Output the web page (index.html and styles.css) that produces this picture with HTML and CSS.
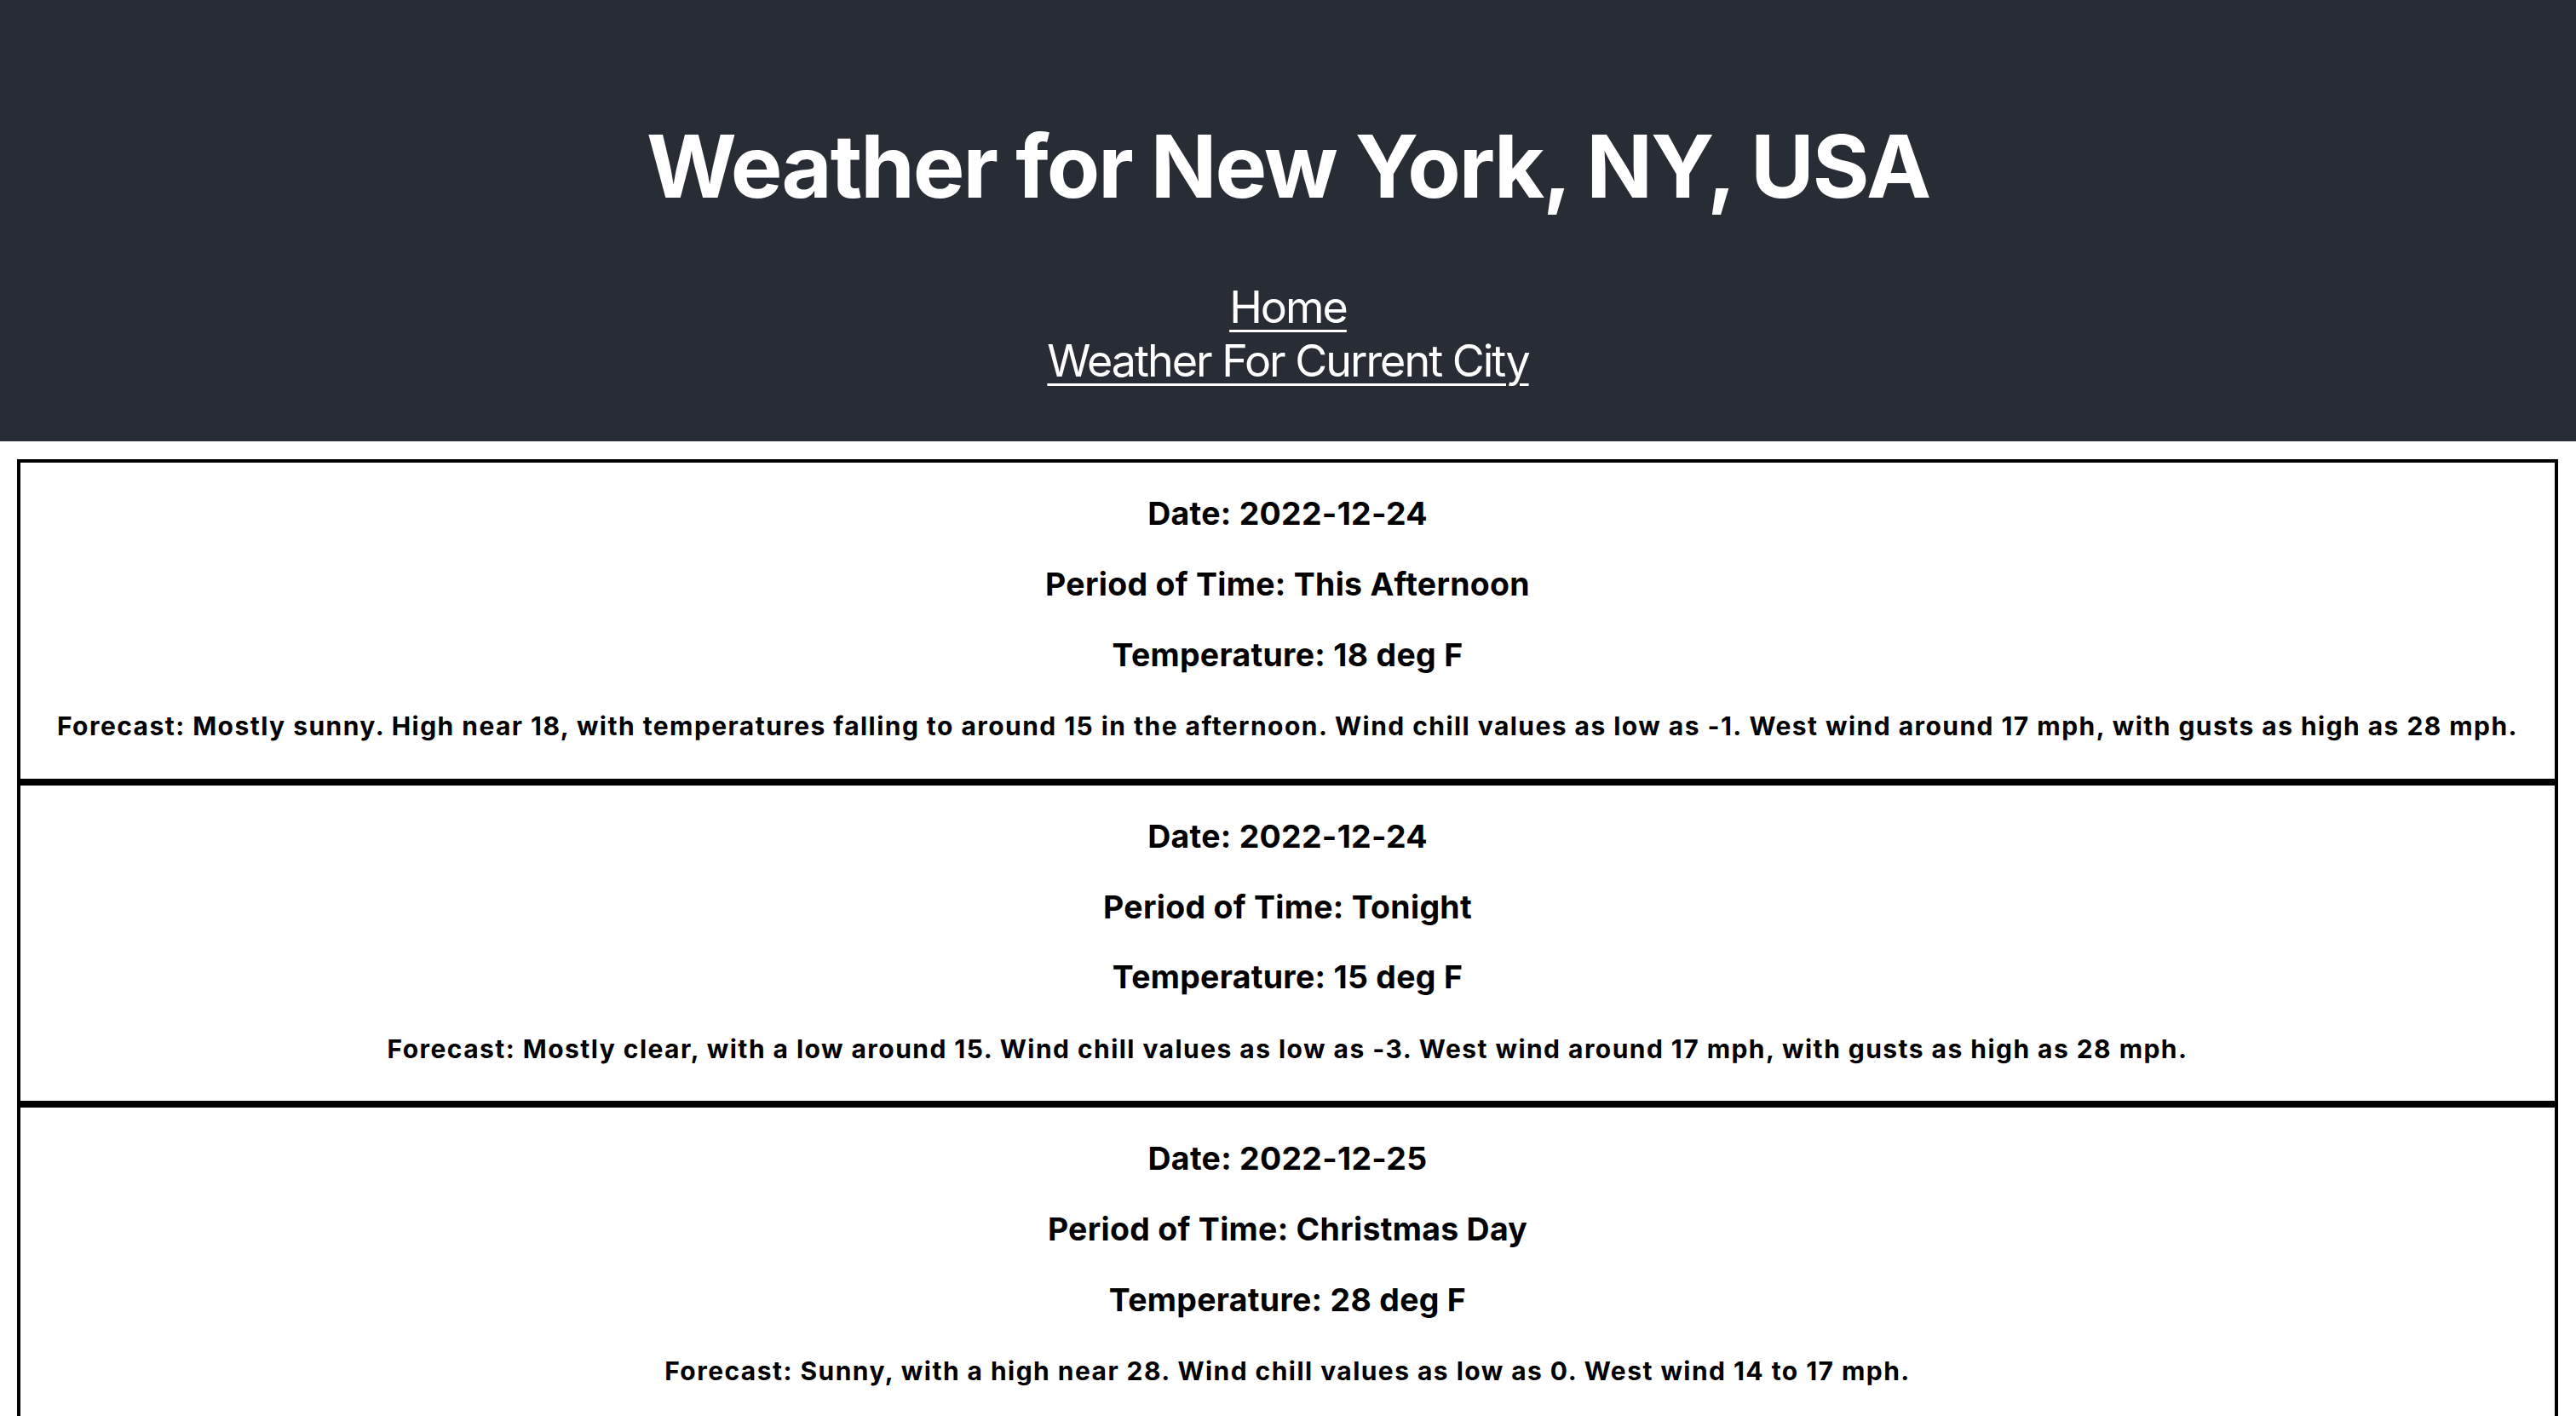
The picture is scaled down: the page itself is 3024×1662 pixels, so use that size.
FILE: index.html
```html
<!DOCTYPE html>
<html lang="en">
<head>
<meta charset="utf-8">
<title>Weather for New York, NY, USA</title>
<link rel="stylesheet" href="styles.css">
</head>
<body>
<header class="app-header">
  <h1 class="title">Weather for New York, NY, USA</h1>
  <a class="nav-link" href="#">Home</a>
  <a class="nav-link" href="#">Weather For Current City</a>
</header>
<main class="forecast-list">
  <div class="period">
    <h3 class="period-line">Date: 2022-12-24</h3>
    <h3 class="period-line">Period of Time: This Afternoon</h3>
    <h3 class="period-line">Temperature: 18 deg F</h3>
    <h5 class="period-forecast">Forecast: Mostly sunny. High near 18, with temperatures falling to around 15 in the afternoon. Wind chill values as low as -1. West wind around 17 mph, with gusts as high as 28 mph.</h5>
  </div>
  <div class="period">
    <h3 class="period-line">Date: 2022-12-24</h3>
    <h3 class="period-line">Period of Time: Tonight</h3>
    <h3 class="period-line">Temperature: 15 deg F</h3>
    <h5 class="period-forecast">Forecast: Mostly clear, with a low around 15. Wind chill values as low as -3. West wind around 17 mph, with gusts as high as 28 mph.</h5>
  </div>
  <div class="period">
    <h3 class="period-line">Date: 2022-12-25</h3>
    <h3 class="period-line">Period of Time: Christmas Day</h3>
    <h3 class="period-line">Temperature: 28 deg F</h3>
    <h5 class="period-forecast">Forecast: Sunny, with a high near 28. Wind chill values as low as 0. West wind 14 to 17 mph.</h5>
  </div>
</main>
</body>
</html>
```
FILE: styles.css
```css
html, body {
  margin: 0;
  padding: 0;
  background: #ffffff;
}

body {
  font-family: Inter, "Noto Sans", "Liberation Sans", sans-serif;
  font-size: 32px;
  color: #000000;
}

.app-header {
  background-color: #282c34;
  min-height: 518px;
  box-sizing: border-box;
  display: flex;
  flex-direction: column;
  align-items: center;
  justify-content: center;
  color: #ffffff;
  font-size: 52px;
}

.title {
  font-size: 102px;
  font-weight: 700;
  letter-spacing: -2px;
  margin: 71px 0;
  line-height: 1.23;
}

.nav-link {
  color: #ffffff;
  font-weight: 400;
  letter-spacing: -2px;
  line-height: 1.21;
  text-decoration: underline;
  text-decoration-thickness: 3px;
  text-underline-offset: 8px;
}

.forecast-list {
  padding: 21px 21px 0 20px;
}

.period {
  border: 4px solid #000000;
  text-align: center;
}

.period-line {
  font-size: 37.44px;
  font-weight: 700;
  letter-spacing: 0.3px;
  margin: 37.44px 0;
  line-height: 1.21;
}

.period-forecast {
  font-size: 30px;
  font-weight: 700;
  letter-spacing: 1.45px;
  margin: 43px 0;
  line-height: 1.21;
  white-space: nowrap;
}
```
